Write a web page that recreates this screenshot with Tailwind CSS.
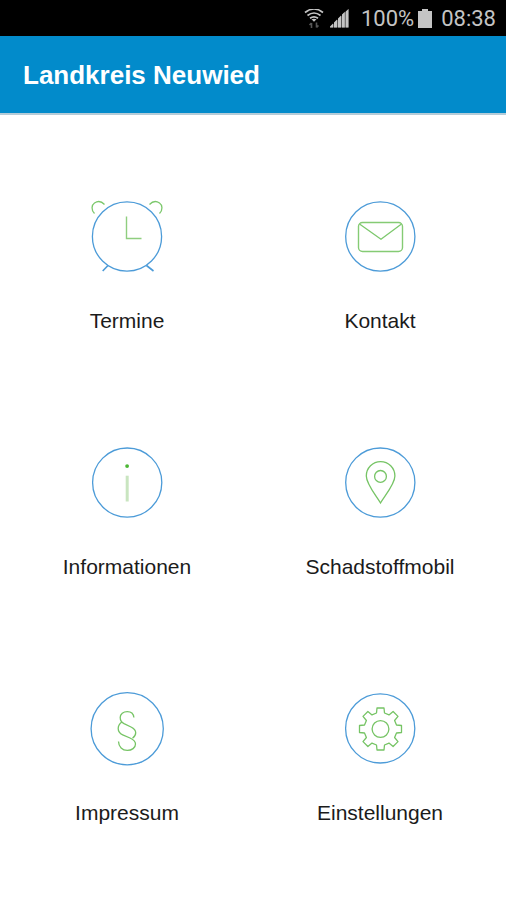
<!DOCTYPE html>
<html lang="de">
<head>
<meta charset="utf-8">
<title>Landkreis Neuwied</title>
<script src="https://cdn.jsdelivr.net/npm/@tailwindcss/browser@4"></script>
</head>
<body class="bg-white">
<div class="w-[506px] h-[900px] overflow-hidden flex flex-col font-['Liberation_Sans',Arial,sans-serif]">
  <div class="h-9 shrink-0 bg-black flex items-center justify-end pr-[10px] pt-[2px] text-[22px] leading-6 text-[#c4c4c4] font-[Roboto,sans-serif]">
    <svg class="w-5 h-5 mr-[6px]" viewBox="0 0 20 20" fill="none" stroke="#c4c4c4" stroke-width="1.700">
      <path d="M1 3.500Q10-3.500 19 3.500M3.500 6.500Q10 1.500 16.500 6.500M6 9.300Q10 6.300 14 9.300"/>
      <path d="M7.500 10.300Q10 9 12.500 10.300L10 12.800z" fill="#c4c4c4" stroke="none"/>
      <path d="M7.500 19v-5M5.500 16l2-2M12.500 13.500v5M14.500 16.500l-2 2" stroke="#555" stroke-width="1.600"/>
    </svg>
    <svg class="w-[19px] h-5 mr-[12px]" viewBox="0 0 19 20">
      <path d="M0 18.500L18.500 0v18.500z" fill="#555"/>
      <path d="M0 18.500v-1l3-3v4zM4 18.500v-5l3-3v8zM8 18.500V9.500l3-3v12zM12 18.500V5.500l2.800-2.800v15.800zM15.700 18.500V2.500L18.500 0v18.500z" fill="#c4c4c4"/>
    </svg>
    <span>100%</span>
    <svg class="w-[14px] h-5 ml-[4px] mr-[9px]" viewBox="0 0 14 20" fill="#c4c4c4"><path d="M4 0h6v2h4v17H0V2h4z"/></svg>
    <span>08:38</span>
  </div>
  <header class="h-[79px] shrink-0 bg-[#028bcb] bg-clip-padding border-b-2 border-[#b5ccd8] pl-[23px] flex items-center">
    <h1 class="text-[26px] leading-8 font-bold text-white">Landkreis Neuwied</h1>
  </header>
  <main class="pt-[81px] grid grid-cols-[254px_252px] gap-y-[109px] text-[21px] leading-6 text-[#1b1b1b]">
    <a class="flex flex-col items-center gap-[33px]">
      <svg class="w-20 h-20" viewBox="0 0 80 80" fill="none" stroke-width="1.300">
        <circle cx="40" cy="40.500" r="34.600" stroke="#4c9bd8"/>
        <path d="M21 69.500L15.700 75M59.500 69.500L66.500 75" stroke="#4c9bd8" stroke-width="1.600"/>
        <path d="M39.500 20.500V42.500H54.500" stroke="#8fce7f" stroke-width="1.400"/>
        <path d="M7.500 17.500C4 14 4.500 9 7.500 7C10.500 5 14.500 5.300 17.500 8.500M62.500 8.500C65.500 5.300 69.500 5 72.500 7C75.500 9 76 14 72.500 17.500" stroke="#7cc86c"/>
      </svg>
      <span>Termine</span>
    </a>
    <a class="flex flex-col items-center gap-[33px]">
      <svg class="w-20 h-20" viewBox="0 0 80 80" fill="none" stroke-width="1.300">
        <circle cx="40.300" cy="40.500" r="34.600" stroke="#4c9bd8"/>
        <rect x="18.500" y="26.500" width="44" height="29" rx="4" stroke="#85cb74" stroke-width="1.400"/>
        <path d="M19.500 28L41 43.300L61.500 28" stroke="#7cc86c"/>
      </svg>
      <span>Kontakt</span>
    </a>
    <a class="flex flex-col items-center gap-[33px]">
      <svg class="w-20 h-20" viewBox="0 0 80 80" fill="none" stroke-width="1.300">
        <circle cx="40.200" cy="40.600" r="34.600" stroke="#4c9bd8"/>
        <circle cx="40.100" cy="24.100" r="1.900" fill="#4cb735"/>
        <path d="M40.200 33.700V59.500" stroke="#c9e5c0" stroke-width="3"/>
      </svg>
      <span>Informationen</span>
    </a>
    <a class="flex flex-col items-center gap-[33px]">
      <svg class="w-20 h-20" viewBox="0 0 80 80" fill="none" stroke-width="1.300">
        <circle cx="40.300" cy="40.600" r="34.600" stroke="#4c9bd8"/>
        <path d="M40.500 61C36 53.500 26.300 42 26.300 34A14.200 14.300 0 0 1 54.900 34C54.900 42 45 53.500 40.500 61Z" stroke="#76c465"/>
        <circle cx="40.500" cy="34.400" r="5.900" stroke="#76c465"/>
      </svg>
      <span>Schadstoffmobil</span>
    </a>
    <a class="flex flex-col items-center gap-[33px]">
      <svg class="w-20 h-20" viewBox="0 0 80 80" fill="none" stroke-width="1.300">
        <circle cx="40.200" cy="40.700" r="36.100" stroke="#4c9bd8"/>
        <path d="M46.900 29.500C46.500 26 43.800 23.600 40.300 23.600C36.300 23.600 33.200 26 33.200 29.500C33.200 32.800 34.600 34.300 37 35.600L44 39C46.800 40.400 48.700 42 48.700 44.800C48.700 47.300 47.300 49 45.500 50.300" stroke="#76c465"/>
        <path d="M34.800 34C32.600 35.700 31.200 37.800 31.200 40.500C31.200 43.500 33 45.600 35.700 46.800L43 50C46.500 51.600 48.500 53 48.500 56C48.500 59.800 44.800 62.400 40.300 62.400C35.300 62.400 31.700 59 31.500 53.500" stroke="#76c465"/>
      </svg>
      <span>Impressum</span>
    </a>
    <a class="flex flex-col items-center gap-[33px]">
      <svg class="w-20 h-20" viewBox="0 0 80 80" fill="none" stroke-width="1.300">
        <circle cx="40.200" cy="40.400" r="34.600" stroke="#4c9bd8"/>
        <g transform="translate(40.500 41)" stroke="#76c465" stroke-linejoin="round">
          <path d="M-4-16L-3.500-21L3.500-21L4-16L8.500-14.100L12.600-17.500L17.500-12.600L14.100-8.500L16-4L21-3.500L21 3.500L16 4L14.100 8.500L17.500 12.600L12.600 17.500L8.500 14.100L4 16L3.500 21L-3.500 21L-4 16L-8.500 14.100L-12.600 17.500L-17.500 12.600L-14.100 8.500L-16 4L-21 3.500L-21-3.500L-16-4L-14.100-8.500L-17.500-12.600L-12.600-17.500L-8.500-14.100Z"/>
          <circle r="8.400"/>
        </g>
      </svg>
      <span>Einstellungen</span>
    </a>
  </main>
</div>
</body>
</html>
